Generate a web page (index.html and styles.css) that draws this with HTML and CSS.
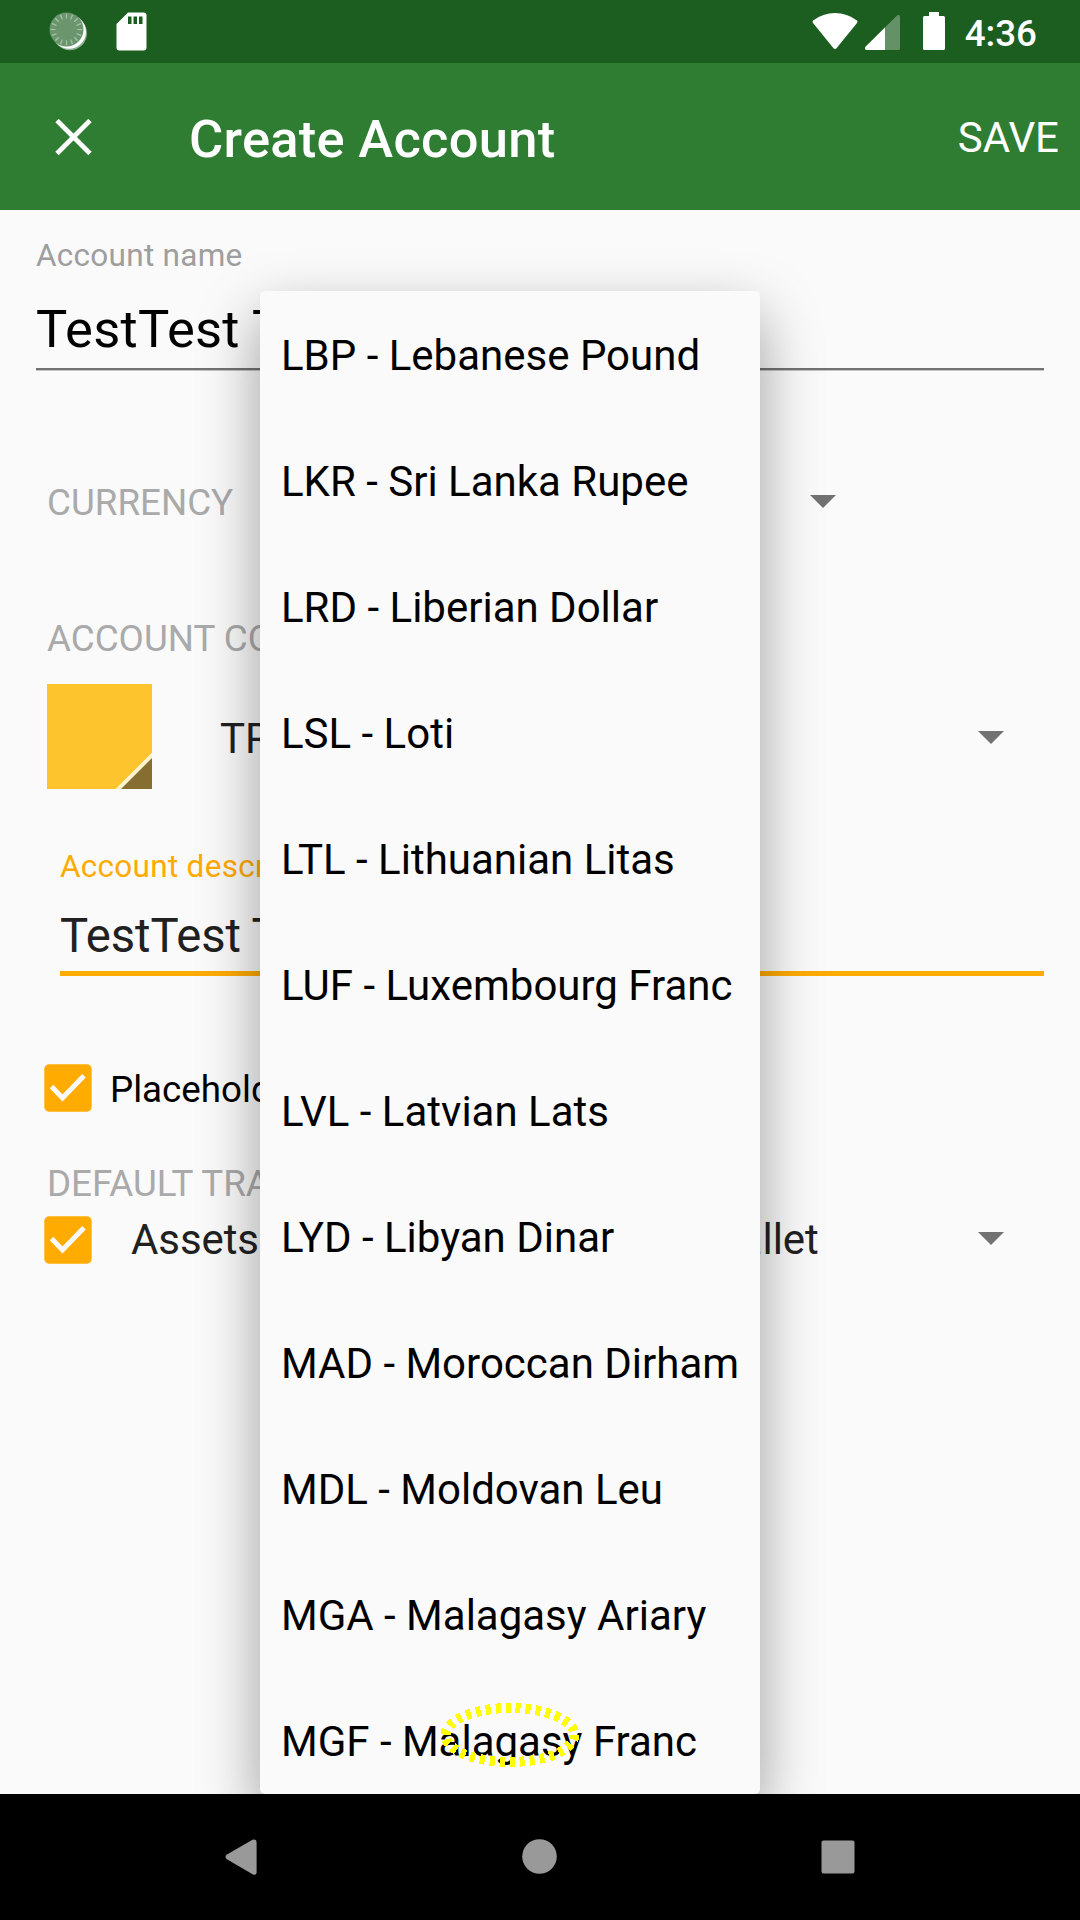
FILE: index.html
```html
<!DOCTYPE html>
<html lang="en">
<head>
<meta charset="utf-8">
<title>Create Account</title>
<link rel="stylesheet" href="styles.css">
</head>
<body>
<div class="screen">
  <header class="status-bar">
    <svg class="status-icons" width="160" height="63" viewBox="0 0 160 63" aria-hidden="true">
      <circle cx="70" cy="33.300" r="17" fill="#8fb091"/>
      <circle cx="69" cy="31.800" r="17" fill="#fff"/>
      <circle cx="66.500" cy="29.500" r="17" fill="#6a956d"/>
      <circle cx="66.500" cy="29.500" r="13.300" fill="none" stroke="#a4bfa6" stroke-width="5" stroke-dasharray="1.300 3.878" stroke-dashoffset="0.650" pathLength="82.848"/>
      <path d="M128 12.500h15.500a3 3 0 0 1 3 3v32a3 3 0 0 1-3 3h-24a3 3 0 0 1-3-3V24z" fill="#fff"/>
      <path d="M128 16.500h3.500v7.500H128zM133.500 16.500h3.500v7.500h-3.500zM139 16.500h3.500v7.500H139z" fill="#1b5e20"/>
    </svg>
    <div class="status-right">
      <svg width="134" height="63" viewBox="812 0 134 63" aria-hidden="true">
        <path d="M813 20.500Q823 13 835 13T857 20.500Q858 21.500 857 23L836.500 48.200Q835 49.800 833.500 48.200L813 23Q812 21.500 813 20.500z" fill="#fff"/>
        <path d="M865.500 46.800L897 15.500Q900 14 900 17V48.500Q900 50 898.500 50H866.500Q864 49.500 865.500 46.800z" fill="#649266"/>
        <path d="M865.500 46.800L885 27.500V50H866.500Q864 49.500 865.500 46.800z" fill="#fff"/>
        <path d="M929 12h10v4h4.500q1.500 0 1.500 1.500v31q0 1.500-1.500 1.500h-19q-1.500 0-1.500-1.500v-31q0-1.500 1.500-1.500h4.500z" fill="#fff"/>
      </svg>
      <span class="clock">4:36</span>
    </div>
  </header>

  <div class="app-bar">
    <svg class="close" width="37" height="36" viewBox="-0.500 0 37 36" aria-label="Close"><path d="M1.500 1.500L34.500 34.500M34.500 1.500L1.500 34.500" stroke="#fff" stroke-width="4.800"/></svg>
    <h1 class="title">Create Account</h1>
    <span class="save">SAVE</span>
  </div>

  <main class="form">
    <div class="field name-field">
      <div class="label">Account name</div>
      <div class="input">TestTest Test</div>
    </div>
    <div class="currency-row">
      <span class="caption">CURRENCY</span>
      <svg class="caret" width="26" height="13" viewBox="0 0 26 13"><path d="M0 0h26L13 13z"/></svg>
    </div>
    <div class="caption color-caption">ACCOUNT COLOR &amp; TYPE</div>
    <div class="type-row">
      <svg width="105" height="105" viewBox="0 0 105 105" aria-hidden="true">
        <path d="M0 0h105v105H0z" fill="#fec42d"/>
        <path d="M105 68.500V105H68.500z" fill="#fff3d0"/>
        <path d="M105 74V105H74z" fill="#866d30"/>
      </svg>
      <span class="type-value">TRADING</span>
      <svg class="caret" width="26" height="13" viewBox="0 0 26 13"><path d="M0 0h26L13 13z"/></svg>
    </div>
    <div class="field description-field">
      <div class="label">Account description</div>
      <div class="input">TestTest Test</div>
    </div>
    <div class="check-row placeholder-row">
      <svg class="checkbox" width="48" height="48" viewBox="0 0 48 48"><rect x=".300" y=".300" width="47.400" height="47.400" rx="5"/><path d="M7.500 22.500L18.500 34L40 11.800"/></svg>
      <span class="placeholder-text">Placeholder account</span>
    </div>
    <div class="caption transfer-caption">DEFAULT TRANSFER ACCOUNT</div>
    <div class="check-row transfer-row">
      <svg class="checkbox" width="48" height="48" viewBox="0 0 48 48"><rect x=".300" y=".300" width="47.400" height="47.400" rx="5"/><path d="M7.500 22.500L18.500 34L40 11.800"/></svg>
      <span class="transfer-value">Assets:Current Assets:Cash in Wallet</span>
      <svg class="caret" width="26" height="13" viewBox="0 0 26 13"><path d="M0 0h26L13 13z"/></svg>
    </div>
  </main>

  <nav class="nav-bar">
    <svg width="1080" height="126" viewBox="0 0 1080 126" aria-hidden="true" fill="#999">
      <path d="M226.500 60.800L252.500 45.800Q256.600 44.500 256.600 48V78.500Q256.600 81.500 253 80.500L226.500 65Q224.500 63 226.500 60.800z"/>
      <circle cx="539.500" cy="62.500" r="17.300"/>
      <rect x="821.500" y="46.500" width="33" height="33" rx="2"/>
    </svg>
  </nav>

  <ul class="dropdown">
    <li>LBP - Lebanese Pound</li>
    <li>LKR - Sri Lanka Rupee</li>
    <li>LRD - Liberian Dollar</li>
    <li>LSL - Loti</li>
    <li>LTL - Lithuanian Litas</li>
    <li>LUF - Luxembourg Franc</li>
    <li>LVL - Latvian Lats</li>
    <li>LYD - Libyan Dinar</li>
    <li>MAD - Moroccan Dirham</li>
    <li>MDL - Moldovan Leu</li>
    <li>MGA - Malagasy Ariary</li>
    <li>MGF - Malagasy Franc</li>
  </ul>

  <svg class="touch-mark" width="144" height="68" viewBox="438 1701 144 68" aria-hidden="true">
    <ellipse cx="510" cy="1735" rx="64.500" ry="27" fill="none" stroke="#ff0" stroke-width="10" stroke-dasharray="5 5" shape-rendering="crispEdges"/>
  </svg>
</div>
</body>
</html>
```
FILE: styles.css
```css
* {
  box-sizing: border-box;
}

body {
  margin: 0;
  font-family: Roboto, sans-serif;
  background: #fafafa;
}

svg {
  display: block;
  flex: none;
}

.screen {
  position: relative;
  display: flex;
  flex-direction: column;
  width: 1080px;
  height: 1920px;
  overflow: hidden;
  white-space: nowrap;
}

.status-bar {
  display: flex;
  justify-content: space-between;
  height: 63px;
  background: #1b5e20;
  color: #fff;
}

.status-right {
  display: flex;
  gap: 19px;
  padding-right: 43px;
}

.clock {
  font-size: 36.75px;
  font-weight: 500;
  line-height: 67px;
}

.app-bar {
  display: flex;
  align-items: center;
  height: 147px;
  padding: 0 21px 0 55px;
  background: #2e7d32;
  color: #fff;
}

.title {
  margin: 4px 0 0 97px;
  font-size: 52.5px;
  font-weight: 500;
  line-height: 64px;
  letter-spacing: 0.27px;
}

.save {
  margin: 2px 0 0 auto;
  font-size: 42px;
}

.form {
  flex: 1;
  padding: 26px 36px 0;
}

.label {
  font-size: 31.5px;
  line-height: 40px;
  letter-spacing: 0.28px;
  color: #9e9e9e;
}

.input {
  margin-top: 21px;
}

.name-field .input {
  padding-bottom: 7px;
  border-bottom: 2px solid #727272;
  box-shadow: 0 1px #c4c4c4;
  font-size: 52.5px;
  line-height: 64px;
  letter-spacing: 0.25px;
  color: #000;
}

.caption {
  font-size: 36.75px;
  line-height: 44px;
  color: #aaa;
}

.currency-row {
  display: flex;
  align-items: center;
  justify-content: space-between;
  margin: 111px 208px 0 11px;
}

.caret {
  fill: #727272;
}

.currency-row .caret {
  margin-bottom: 3px;
}

.color-caption {
  margin: 92px 0 0 11px;
}

.type-row {
  display: flex;
  align-items: center;
  margin: 23px 40px 0 11px;
}

.type-value {
  margin: 3px 0 0 68px;
  font-size: 42px;
  color: #212121;
}

.type-row .caret,
.transfer-row .caret {
  margin-left: auto;
}

.type-row .caret {
  margin-top: 2px;
}

.description-field {
  margin: 58px 0 0 24px;
}

.description-field .label {
  color: #ffab00;
}

.description-field .input {
  padding-bottom: 7px;
  border-bottom: 5px solid #ffab00;
  font-size: 47.25px;
  line-height: 56px;
  letter-spacing: -0.1px;
  color: #212121;
}

.check-row {
  display: flex;
  align-items: center;
  height: 48px;
  margin-left: 8px;
}

.checkbox rect {
  fill: #ffab00;
}

.checkbox path {
  fill: none;
  stroke: #fafafa;
  stroke-width: 5;
}

.placeholder-row {
  margin-top: 88px;
}

.placeholder-text {
  margin: 3px 0 0 18px;
  font-size: 36.75px;
  color: #000;
}

.transfer-caption {
  margin: 50px 0 0 11px;
}

.transfer-row {
  margin-top: 10px;
  margin-right: 40px;
}

.transfer-value {
  margin: 0 0 2px 39px;
  font-size: 42px;
  letter-spacing: -0.08px;
  color: #212121;
}

.transfer-row .caret {
  margin-bottom: 3px;
}

.nav-bar {
  position: relative;
  z-index: 2;
  height: 126px;
  background: #000;
}

.dropdown {
  position: absolute;
  z-index: 1;
  top: 291px;
  left: 260px;
  width: 500px;
  height: 1503px;
  margin: 0;
  padding: 2px 21px 0;
  overflow: hidden;
  list-style: none;
  background: #fafafa;
  border-radius: 5px;
  box-shadow: 0 24px 60px rgba(0, 0, 0, 0.38);
  font-size: 42px;
  line-height: 126px;
  color: #000;
}

.touch-mark {
  position: absolute;
  z-index: 3;
  top: 1701px;
  left: 438px;
}
```
